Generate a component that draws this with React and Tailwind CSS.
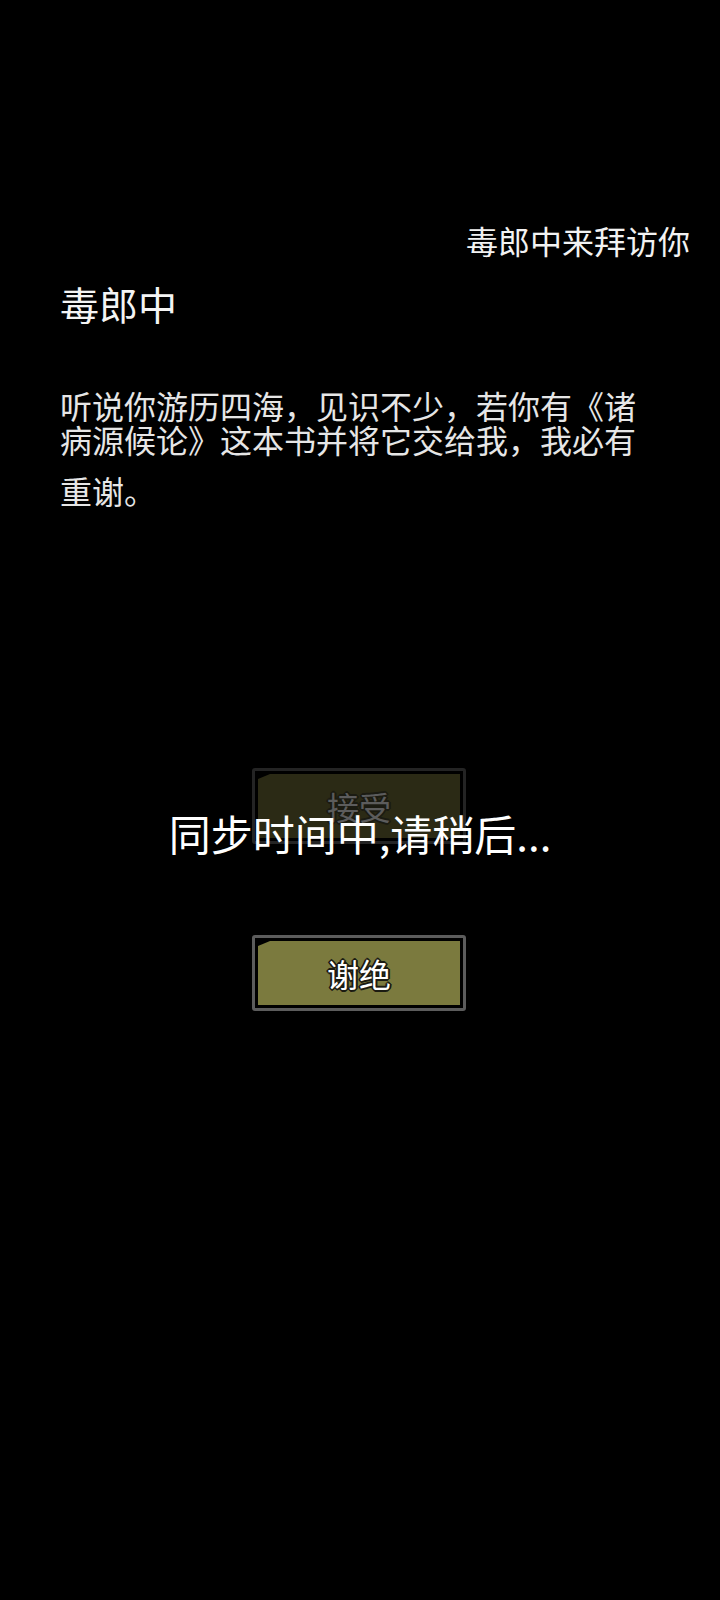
export default function App() {
  const font = { fontFamily: '"Noto Sans CJK SC", "Noto Sans", sans-serif' };
  const outline =
    "[text-shadow:2px_0_0_#1b1b12,-2px_0_0_#1b1b12,0_2px_0_#1b1b12,0_-2px_0_#1b1b12,1px_1px_0_#1b1b12,-1px_-1px_0_#1b1b12,1px_-1px_0_#1b1b12,-1px_1px_0_#1b1b12]";

  return (
    <div className="relative min-h-[1600px] w-full bg-black text-white" style={font}>
      {/* visitor banner */}
      <div className="pt-[224px] pr-[30px] text-right text-[32px] leading-none text-[#f2f2f2]">
        毒郎中来拜访你
      </div>

      {/* speaker */}
      <div className="mt-[28px] pl-[60px] text-[39px] leading-none text-[#f4f4f4]">毒郎中</div>

      {/* dialogue */}
      <div className="mt-[66px] pl-[60px] text-[32px] leading-none text-[#e6e6e6]">
        <div>听说你游历四海，见识不少，若你有《诸</div>
        <div className="mt-[2px]">病源候论》这本书并将它交给我，我必有</div>
        <div className="mt-[19px]">重谢。</div>
      </div>

      {/* choices */}
      <div className="mt-[262px] flex flex-col items-center gap-[91px]">
        <div className="ml-[-2px] h-[76px] w-[214px] rounded-[3px] border-[3px] border-[#242424] bg-black p-[3px]">
          <div className="flex h-full items-center justify-center bg-[#2b2a15] [clip-path:polygon(12px_0,100%_0,100%_100%,0_100%,0_5px)]">
            <span className={"text-[32px] leading-none text-[#5c5c5c] " + outline}>接受</span>
          </div>
        </div>
        <div className="ml-[-2px] h-[76px] w-[214px] rounded-[3px] border-[3px] border-[#5c5c5c] bg-black p-[3px]">
          <div className="flex h-full items-center justify-center bg-[#7b7a3e] [clip-path:polygon(12px_0,100%_0,100%_100%,0_100%,0_5px)]">
            <span className={"text-[32px] leading-none text-white " + outline}>谢绝</span>
          </div>
        </div>
      </div>

      {/* sync overlay */}
      <div className="absolute left-0 right-0 top-[812px] text-center text-[42px] leading-none text-white">
        同步时间中,请稍后...
      </div>
    </div>
  );
}
